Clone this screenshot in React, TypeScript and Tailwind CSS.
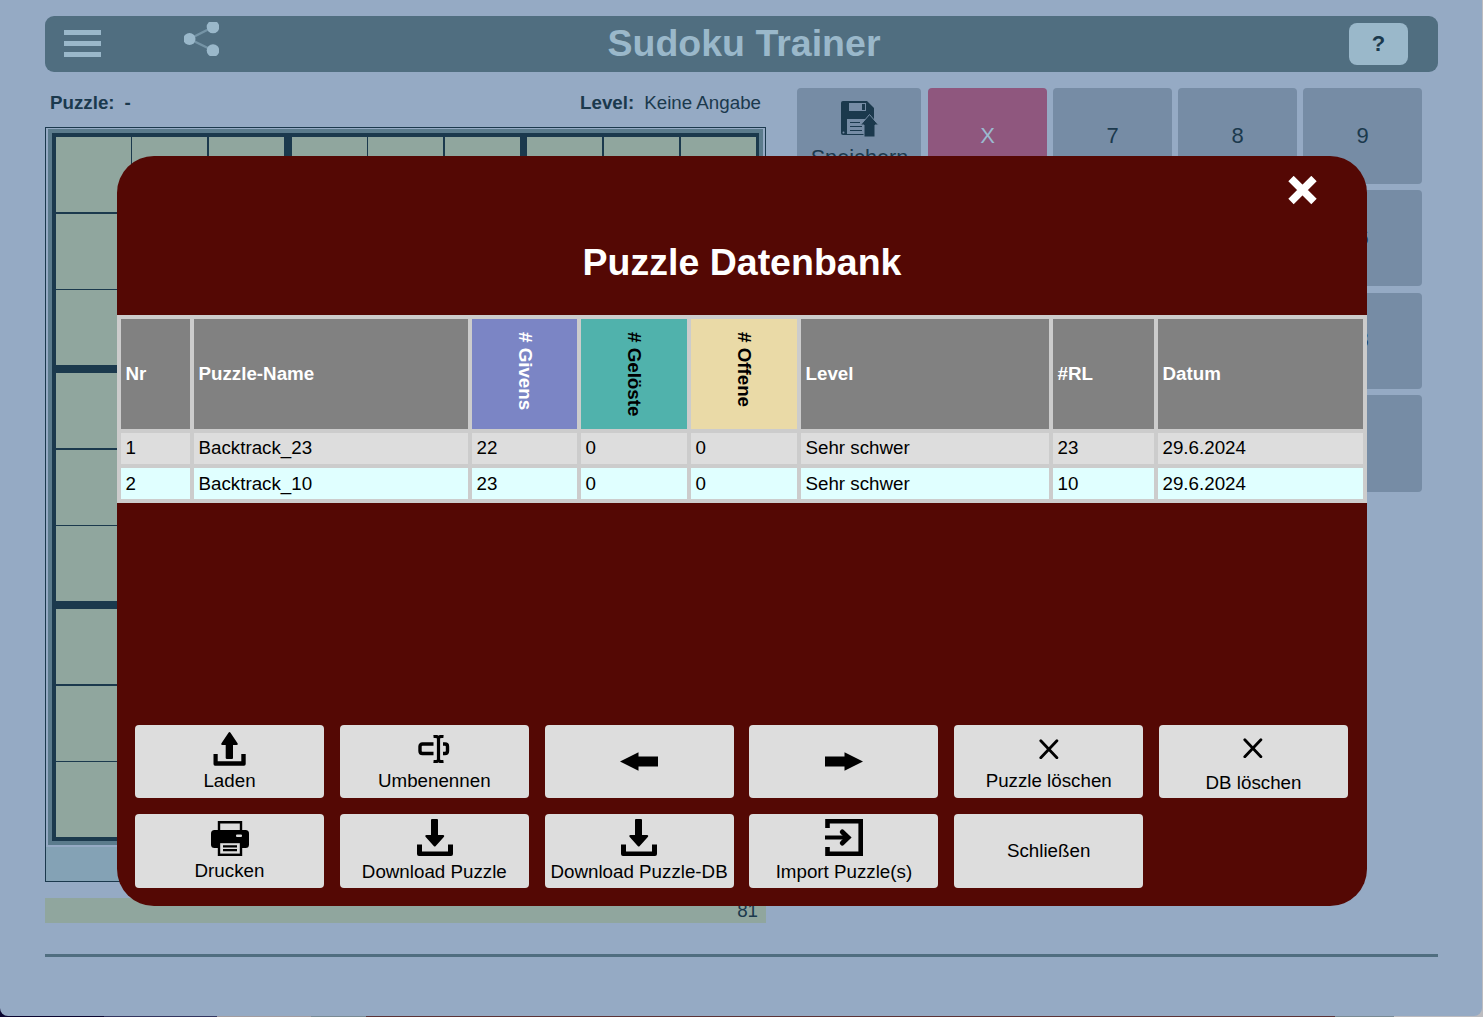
import React from "react";

const cells = Array.from({ length: 81 }, (_, i) => i);

const keyRows = [
  ["7", "8", "9"],
  ["4", "5", "6"],
  ["1", "2", "3"],
];

const puzzles = [
  ["1", "Backtrack_23", "22", "0", "0", "Sehr schwer", "23", "29.6.2024"],
  ["2", "Backtrack_10", "23", "0", "0", "Sehr schwer", "10", "29.6.2024"],
];

function ShareIcon() {
  return (
    <svg width="35" height="34" viewBox="0 0 35 34" className="mt-1.5 ml-[83px]">
      <path d="M29 5 5.5 17 29 28.500" stroke="#7594a6" strokeWidth="2.400" fill="none" />
      <g fill="#9ab8ca">
        <circle cx="29" cy="5" r="6.300" />
        <circle cx="5.500" cy="17" r="6" />
        <circle cx="29" cy="28.500" r="6.300" />
      </g>
    </svg>
  );
}

function SaveIcon() {
  return (
    <svg width="38" height="37" viewBox="0 0 38 37" className="ml-px">
      <path d="M2 0H26L33 7V34H2Q0 34 0 32V2Q0 0 2 0Z" fill="#1b394d" />
      <path d="M8 2H25V10H8ZM6 18H28V33H6Z" fill="#768ca5" />
      <path d="M21 3H24V9H21Z" fill="#1b394d" />
      <path d="M9 21.500H19M9 25.500H21M9 29.500H21" stroke="#1b394d" strokeWidth="1" />
      <circle cx="2.500" cy="31.500" r="1" fill="#768ca5" />
      <path d="M28.500 13.500 37.500 24H34V36H23V24H19.500Z" fill="#1b394d" stroke="#768ca5" strokeWidth="1" />
    </svg>
  );
}

function UploadIcon() {
  return (
    <svg width="33" height="34" viewBox="0 0 33 34">
      <path d="M16.500 0Q17 0 17.500 .7L24.700 11.500Q25.200 13 23.500 13H20V26Q20 27 19 27H14Q12.700 27 12.700 26V13H9.500Q7.800 13 8.300 11.500L15.500 .7Q16 0 16.500 0Z" />
      <path d="M.5 22H4.700V29.300H28.300V22H32.700V32Q32.700 33.700 31 33.700H2Q.5 33.700 .5 32Z" />
    </svg>
  );
}

function DownloadIcon({ className = "" }: { className?: string }) {
  return (
    <svg width="36" height="37" viewBox="0 0 36 37" className={className}>
      <path d="M14 1Q14 0 15 0H20Q21 0 21 1V16H26Q28 16.300 26.800 18L18.500 27.200Q17.700 27.800 17 27.200L8.700 18Q7.500 16.300 9.500 16H14Z" />
      <path d="M0 25.500H5V32.500H31V25.500H36V35Q36 37 34 37H2Q0 37 0 35Z" />
    </svg>
  );
}

function RenameIcon() {
  return (
    <svg width="32" height="28" viewBox="0 0 32 28" fill="none" stroke="#000">
      <path d="M15.500 9H4.500Q2 9 2 11.500V16Q2 18.500 4.500 18.500H15.500" strokeWidth="3.400" />
      <path d="M25 9H27Q29.500 9 29.500 11.500V16Q29.500 18.500 27 18.500H25" strokeWidth="3.400" />
      <path d="M15.500 1.500Q20.500 1 20.500 3.500Q20.500 1 25.500 1.500M20.500 3V25M15.500 26.500Q20.500 27 20.500 24.500Q20.500 27 25.500 26.500" strokeWidth="3.200" />
    </svg>
  );
}

function PrintIcon() {
  return (
    <svg width="38" height="35" viewBox="0 0 38 35">
      <path d="M8 10V1.300H30V10" fill="none" stroke="#000" strokeWidth="2.400" />
      <rect y="9" width="38" height="18" rx="3.500" />
      <rect x="8" y="21" width="22" height="12.800" fill="#ddd" stroke="#000" strokeWidth="2.400" />
      <path d="M12 25.300H26M12 29.200H26" stroke="#000" strokeWidth="2.200" />
      <rect x="25" y="13.500" width="6" height="2.500" rx="1" fill="#ddd" />
    </svg>
  );
}

function ImportIcon() {
  return (
    <svg width="38" height="37" viewBox="0 0 38 37" fill="none" stroke="#000">
      <path d="M2.500 9V2.300H35.700V34.700H2.500V28" strokeWidth="4.600" />
      <path d="M0 18.500H22" strokeWidth="4" />
      <path d="M17.300 13 23 18.500 17.300 24" strokeWidth="5" strokeLinecap="round" />
    </svg>
  );
}

function ArrowIcon({ flip = false }: { flip?: boolean }) {
  return (
    <svg width="38" height="20" viewBox="0 0 38 20" className={flip ? "-scale-x-100" : ""}>
      <path d="M0 10.500 18.500 1.200V5.500H38V15.500H18.500V19.800Z" />
    </svg>
  );
}

function CrossIcon() {
  return (
    <svg width="20" height="20" viewBox="0 0 20 20">
      <path d="M1.800 1.700 17.900 18.700M17.900 1.700 1.800 18.700" stroke="#000" strokeWidth="2.800" strokeLinecap="round" />
    </svg>
  );
}

const actions = [
  { label: "Laden", icon: <UploadIcon />, pad: "pt-[7px]", text: "mt-[4px]" },
  { label: "Umbenennen", icon: <RenameIcon />, pad: "pt-[10px]", text: "mt-[7px]" },
  { label: "", icon: <ArrowIcon />, pad: "pt-[26px]", text: "" },
  { label: "", icon: <ArrowIcon flip />, pad: "pt-[26px]", text: "" },
  { label: "Puzzle löschen", icon: <CrossIcon />, pad: "pt-[14px]", text: "mt-[11px]" },
  { label: "DB löschen", icon: <CrossIcon />, pad: "pt-[13px]", text: "mt-[14px]" },
  { label: "Drucken", icon: <PrintIcon />, pad: "pt-[7px]", text: "mt-[4px]" },
  { label: "Download Puzzle", icon: <DownloadIcon className="ml-px" />, pad: "pt-[5px]", text: "mt-[5px]" },
  { label: "Download Puzzle-DB", icon: <DownloadIcon />, pad: "pt-[5px]", text: "mt-[5px]" },
  { label: "Import Puzzle(s)", icon: <ImportIcon />, pad: "pt-[5px]", text: "mt-[5px]" },
  { label: "Schließen", icon: null, pad: "pt-[26px]", text: "" },
];

function Header() {
  return (
    <header className="relative flex h-14 w-[1393px] rounded-[9px] bg-[#506e80]">
      <div className="mt-3.5 ml-[19px] flex h-[27px] w-[37px] flex-col justify-between">
        <div className="h-[5px] bg-[#9ab8ca]" />
        <div className="h-[5px] bg-[#9ab8ca]" />
        <div className="h-[5px] bg-[#9ab8ca]" />
      </div>
      <ShareIcon />
      <h1 className="absolute inset-x-0 top-1.5 pl-[5px] text-center text-[37.5px] leading-[43px] font-bold text-[#9ab8ca]">
        Sudoku Trainer
      </h1>
      <button className="mt-[7px] mr-[30px] ml-auto h-[42px] w-[59px] rounded-lg bg-[#9ab8ca] text-[22px] leading-[40px] font-bold">
        ?
      </button>
    </header>
  );
}

function Board() {
  return (
    <div className="mt-[13px] h-[755px] w-[721px] border border-[#1b394d] bg-[#84a2b5]">
      <div className="h-[719px] bg-[#95aac4] pt-px pl-[2px]">
        <div className="w-[715px] border-4 border-[#5b7b8c]">
          <div className="grid h-[708px] w-[707px] grid-cols-[76px_77px_83px_76px_77px_82px_77px_77px_75px] grid-rows-[77px_76px_83px_77px_76px_83px_77px_76px_75px] border-4 border-r-[3px] border-[#1b394d] bg-[#1b394d]">
            {cells.map((i) => (
              <div key={i} className="size-[75px] bg-[#90a69e]" />
            ))}
          </div>
        </div>
      </div>
    </div>
  );
}

function Keypad() {
  const gray = "rounded-[4px] bg-[#768ca5]";
  return (
    <div className="mt-4 ml-[31px] flex gap-[7px]">
      <div className="flex w-[124px] flex-col gap-1.5">
        <div className={`flex h-24 flex-col items-center pt-[13px] ${gray}`}>
          <SaveIcon />
          <span className="mt-[8px] pl-px text-[21.7px] leading-[24px]">Speichern</span>
        </div>
      </div>
      <div className="grid h-[404px] grid-cols-[119px_119px_119px_119px] grid-rows-[96px_96px_96px_97px] content-between gap-x-1.5 text-[22px]">
        <div className="flex items-center justify-center rounded-[4px] bg-[#8f577e] pb-0.5 text-[#9bbad0]">X</div>
        {keyRows.map((row, r) => (
          <React.Fragment key={r}>
            {r > 0 && <div className={gray} />}
            {row.map((k) => (
              <div key={k} className={`flex items-center justify-center pb-0.5 ${gray}`}>
                {k}
              </div>
            ))}
          </React.Fragment>
        ))}
        <div className={`col-span-4 ${gray}`} />
      </div>
    </div>
  );
}

function PuzzleTable() {
  const grid = "grid grid-cols-[69px_274px_105px_106px_106px_248px_101px_205px] gap-1";
  const head = "flex items-center bg-[#818181] pl-[4.5px] text-white";
  const turned = "flex items-center justify-center";
  const turnedText = "h-[86px] pt-px [writing-mode:vertical-rl]";
  return (
    <div className="flex h-[188px] flex-col gap-1 bg-[#ccc] p-1 text-[18.75px] text-black">
      <div className={`h-[110px] font-bold ${grid}`}>
        <div className={head}>Nr</div>
        <div className={head}>Puzzle-Name</div>
        <div className={`bg-[#7b85c5] text-white ${turned}`}>
          <span className={turnedText}># Givens</span>
        </div>
        <div className={`bg-[#50b2ac] ${turned}`}>
          <span className={turnedText}># Gelöste</span>
        </div>
        <div className={`bg-[#eadaa7] ${turned}`}>
          <span className={turnedText}># Offene</span>
        </div>
        <div className={head}>Level</div>
        <div className={head}>#RL</div>
        <div className={head}>Datum</div>
      </div>
      {puzzles.map((row, r) => (
        <div key={r} className={`h-[31px] ${grid}`}>
          {row.map((v, c) => (
            <div key={c} className={`pl-[4.5px] ${r === 1 ? "bg-[#e0ffff] leading-[31px]" : "bg-[#ddd] leading-[30px]"}`}>
              {v}
            </div>
          ))}
        </div>
      ))}
    </div>
  );
}

function DatabaseDialog() {
  return (
    <section className="absolute top-[156px] left-[117px] flex h-[750px] w-[1250px] flex-col rounded-[37px] bg-[#540804]">
      <div className="flex h-[83px] justify-end pt-5 pr-[50px]">
        <svg width="29" height="29" viewBox="0 0 29 29">
          <path d="M3 2.500 26 25.500M26 2.500 3 25.500" stroke="#fff" strokeWidth="7.600" />
        </svg>
      </div>
      <h2 className="h-[76px] text-center text-[37.5px] leading-[46px] font-bold text-white">Puzzle Datenbank</h2>
      <PuzzleTable />
      <div className="mt-auto mb-[18px] ml-[18px] grid w-[1213px] grid-cols-[repeat(6,189px)] grid-rows-[73px_74px] justify-between gap-y-4 self-start text-[18.75px] leading-[22px] text-black">
        {actions.map((a, i) => (
          <button key={i} className={`flex flex-col items-center rounded-[4px] bg-[#ddd] whitespace-nowrap ${a.pad}`}>
            {a.icon}
            {a.label && <span className={a.text}>{a.label}</span>}
          </button>
        ))}
      </div>
    </section>
  );
}

export default function App() {
  return (
    <div className="relative h-[1017px] w-[1483px] overflow-hidden bg-[linear-gradient(90deg,#0b0630_0_7%,#34365f_7%_14.6%,#a29da1_14.6%_21%,#7b8a94_21%_24.7%,#5b3438_24.7%_90%,#7b8a94_90%_94%,#bcbcc0_94%)] pr-px pb-px font-['Liberation_Sans',Arial,sans-serif] text-[#1b394d]">
      <div className="h-full rounded-b-lg bg-[#95aac4] pt-4 pl-[45px]">
        <Header />
        <main className="flex">
          <div className="w-[721px]">
            <div className="mt-5 flex h-[22px] pr-[5px] pl-[5px] text-[18.75px] leading-[21px]">
              <b>Puzzle:</b>
              <b className="ml-2.5">-</b>
              <b className="mr-2.5 ml-auto">Level:</b>
              <span>Keine Angabe</span>
            </div>
            <Board />
            <div className="mt-4 h-[25px] bg-[#90a69e] pr-2 text-right text-[18.75px] leading-[25px]">81</div>
          </div>
          <Keypad />
        </main>
        <div className="mt-[31px] h-[3px] w-[1393px] bg-[#506e80]" />
      </div>
      <DatabaseDialog />
    </div>
  );
}
